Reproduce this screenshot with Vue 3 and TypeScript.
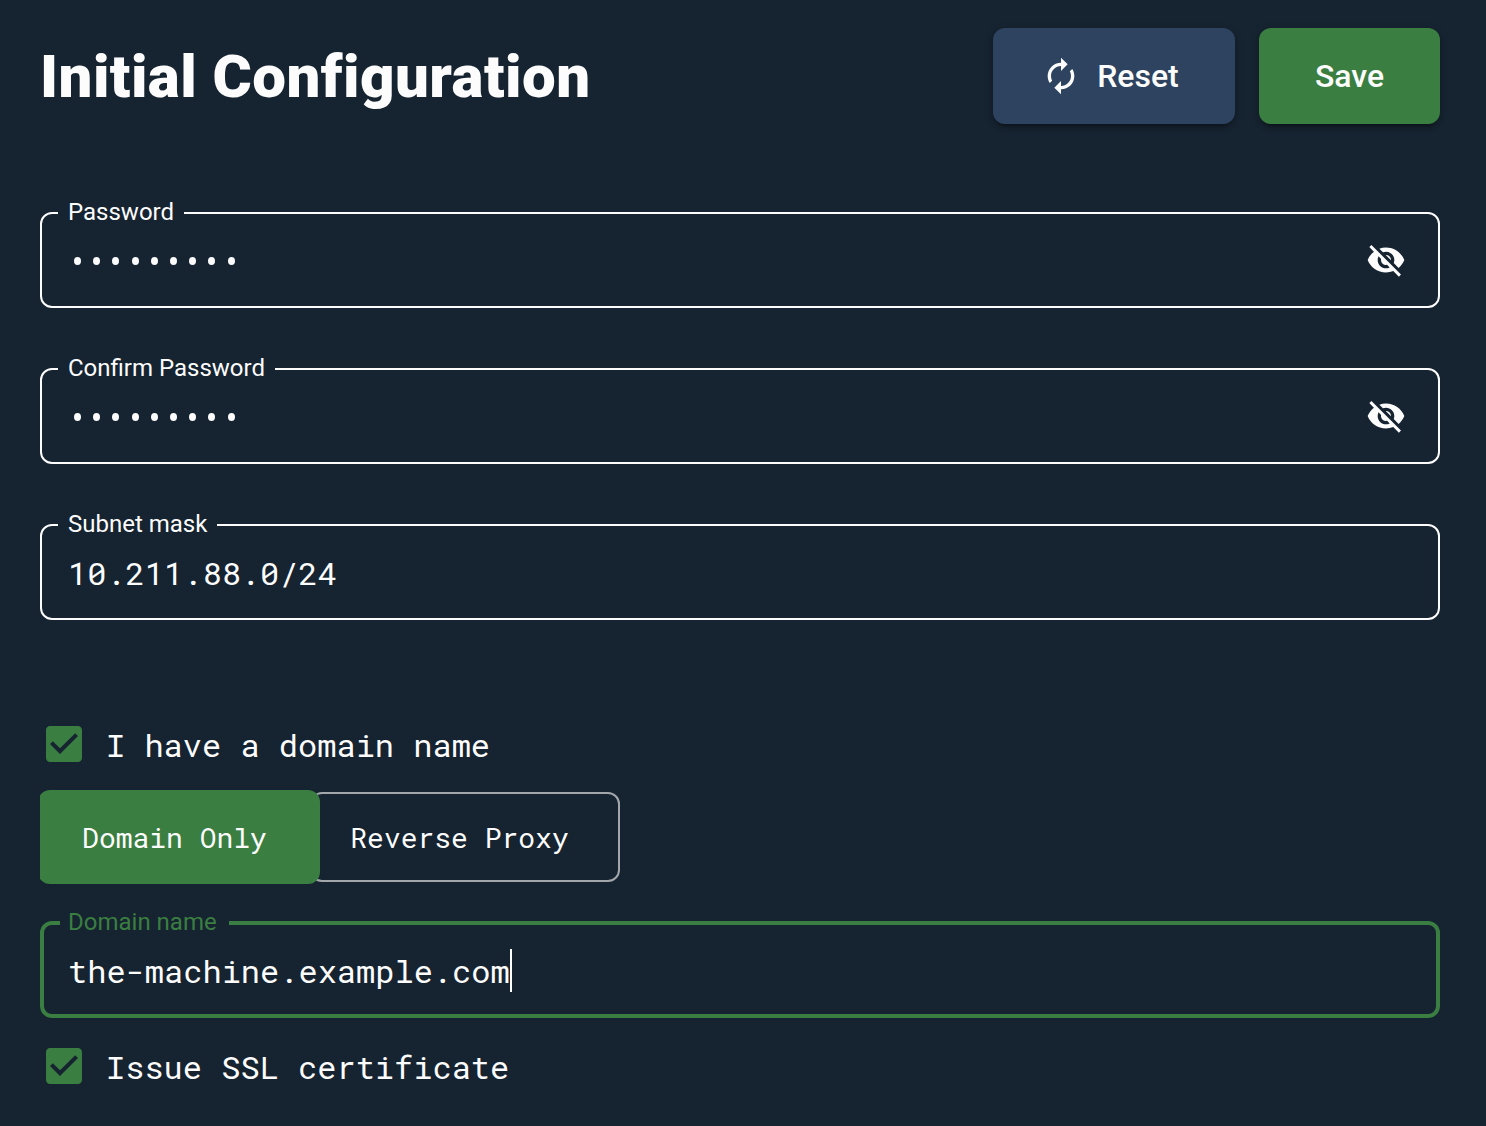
<script setup lang="ts">
import { ref } from 'vue'

interface Field {
  label: string
  value: string
  secret: boolean
}

const fields: Field[] = [
  { label: 'Password', value: 'password1', secret: true },
  { label: 'Confirm Password', value: 'password1', secret: true },
  { label: 'Subnet mask', value: '10.211.88.0/24', secret: false },
]

const modes = ['Domain Only', 'Reverse Proxy']
const mode = ref('Domain Only')
const domain = ref('the-machine.example.com')
const checkPath =
  'M19 3H5c-1.11 0-2 .9-2 2v14c0 1.1.89 2 2 2h14c1.11 0 2-.9 2-2V5c0-1.1-.89-2-2-2zm-9 14l-5-5 1.41-1.41L10 14.17l7.59-7.59L19 8l-9 9z'
</script>

<template>
  <main class="page">
    <header class="header">
      <h1 class="title">Initial Configuration</h1>
      <button class="btn reset" type="button">
        <svg class="btn-icon" viewBox="0 0 24 24">
          <path d="M12 6v3l4-4-4-4v3c-4.42 0-8 3.58-8 8 0 1.57.46 3.03 1.24 4.26L6.7 14.8c-.45-.83-.7-1.79-.7-2.8 0-3.31 2.69-6 6-6zm6.76 1.74L17.3 9.2c.44.84.7 1.79.7 2.8 0 3.31-2.69 6-6 6v-3l-4 4 4 4v-3c4.42 0 8-3.58 8-8 0-1.57-.46-3.03-1.24-4.26z" />
        </svg>
        <span>Reset</span>
      </button>
      <button class="btn save" type="button">Save</button>
    </header>

    <section class="fields">
      <div v-for="f in fields" :key="f.label" class="field">
        <fieldset class="outline">
          <legend><span>{{ f.label }}</span></legend>
        </fieldset>
        <div v-if="f.secret" class="dots">
          <span v-for="n in f.value.length" :key="n" class="cell"><i class="dot"></i></span>
        </div>
        <div v-else class="value">{{ f.value }}</div>
        <svg v-if="f.secret" class="eye" viewBox="0 0 24 24">
          <path d="M12 7c2.76 0 5 2.24 5 5 0 .65-.13 1.26-.36 1.83l2.92 2.92c1.51-1.26 2.7-2.89 3.43-4.75-1.73-4.39-6-7.5-11-7.5-1.4 0-2.74.25-3.98.7l2.16 2.16C10.74 7.13 11.35 7 12 7zM2 4.27l2.28 2.28.46.46C3.08 8.3 1.78 10.02 1 12c1.73 4.39 6 7.5 11 7.5 1.55 0 3.03-.3 4.38-.84l.42.42L19.73 22 21 20.73 3.27 3 2 4.27zM7.53 9.8l1.55 1.55c-.05.21-.08.43-.08.65 0 1.66 1.34 3 3 3 .22 0 .44-.03.65-.08l1.55 1.55c-.67.33-1.41.53-2.2.53-2.76 0-5-2.24-5-5 0-.79.2-1.53.53-2.2zm4.31-.78l3.15 3.15.02-.16c0-1.66-1.34-3-3-3l-.17.01z" />
        </svg>
      </div>
    </section>

    <div class="check">
      <svg class="check-box" viewBox="0 0 24 24"><path :d="checkPath" /></svg>
      <span>I have a domain name</span>
    </div>

    <div class="modes">
      <button
        v-for="m in modes"
        :key="m"
        type="button"
        class="mode"
        :class="{ active: m === mode }"
        @click="mode = m"
      >{{ m }}</button>
    </div>

    <div class="field focused">
      <fieldset class="outline">
        <legend><span>Domain name</span></legend>
      </fieldset>
      <div class="value">{{ domain }}</div>
      <i class="caret"></i>
    </div>

    <div class="check ssl">
      <svg class="check-box" viewBox="0 0 24 24"><path :d="checkPath" /></svg>
      <span>Issue SSL certificate</span>
    </div>
  </main>
</template>

<style>
body {
  background: #162330;
}
</style>

<style scoped>
* {
  box-sizing: border-box;
}
.page {
  height: 1126px;
  padding: 28px 46px 0 40px;
  overflow: hidden;
  background: #162330;
  color: #fcfcfc;
  font-family: 'Roboto Mono', 'Liberation Mono', monospace;
  font-size: 32px;
}
svg {
  fill: currentColor;
  flex: none;
}
.header {
  display: flex;
  height: 96px;
  font-family: Roboto, sans-serif;
}
.title {
  flex: 1;
  margin: 0;
  font-size: 60px;
  font-weight: 900;
  line-height: 98px;
  letter-spacing: 0.0075em;
  white-space: nowrap;
}
.btn {
  display: flex;
  align-items: center;
  justify-content: center;
  height: 96px;
  padding: 0;
  border: 0;
  border-radius: 12px;
  color: #fcfcfc;
  font: 500 32px/56px Roboto, sans-serif;
  box-shadow:
    0 6px 2px -4px rgba(0, 0, 0, 0.2),
    0 4px 4px rgba(0, 0, 0, 0.14),
    0 2px 10px rgba(0, 0, 0, 0.12);
}
.reset {
  width: 242px;
  padding-right: 8px;
  background: #2e4360;
}
.save {
  width: 181px;
  margin-left: 24px;
  background: #3a7e41;
}
.btn-icon {
  width: 40px;
  height: 40px;
  margin-right: 16px;
}
.fields {
  display: flex;
  flex-direction: column;
  gap: 60px;
  margin-top: 88px;
}
.field {
  position: relative;
  display: flex;
  align-items: center;
  height: 96px;
  padding: 0 34px 0 28px;
}
.outline {
  position: absolute;
  inset: -10px 0 0;
  min-width: 0;
  margin: 0;
  padding: 0 16px;
  border: 2px solid #fcfcfc;
  border-radius: 12px;
}
.outline legend {
  height: 22px;
  padding: 0 10px;
  font: 400 24px/20px Roboto, sans-serif;
  white-space: nowrap;
}
.value {
  line-height: 46px;
  padding-top: 2px;
  white-space: pre;
}
.dots {
  display: flex;
}
.cell {
  display: flex;
  justify-content: center;
  width: 19.2px;
  padding-top: 2px;
}
.dot {
  width: 7px;
  height: 8px;
  border-radius: 50%;
  background: #fcfcfc;
}
.eye {
  width: 40px;
  height: 40px;
  margin-left: auto;
}
.check {
  display: flex;
  align-items: center;
  height: 48px;
  margin-top: 100px;
  white-space: pre;
}
.check-box {
  width: 48px;
  height: 48px;
  margin-right: 18px;
  color: #3a7e41;
}
.modes {
  display: flex;
  align-items: center;
  width: 580px;
  height: 94px;
  margin: 22px 0 38px;
  overflow: hidden;
}
.mode {
  width: 310px;
  height: 90px;
  margin-left: -10px;
  padding: 2px 11px 0 0;
  border: 2px solid #a2a7ac;
  border-radius: 12px;
  background: none;
  color: #fcfcfc;
  font: 400 28px/40px 'Roboto Mono', 'Liberation Mono', monospace;
  white-space: nowrap;
}
.mode.active {
  position: relative;
  z-index: 1;
  width: 282px;
  height: 94px;
  margin-left: -2px;
  padding: 2px 9px 0 0;
  border: 0;
  background: #3a7e41;
}
.focused .outline {
  border: 4px solid #3a7e41;
  color: #3a7e41;
}
.focused .outline legend {
  padding: 0 12px 0 8px;
}
.caret {
  width: 2px;
  height: 43px;
  background: #fff;
}
.ssl {
  margin-top: 24px;
}
</style>
